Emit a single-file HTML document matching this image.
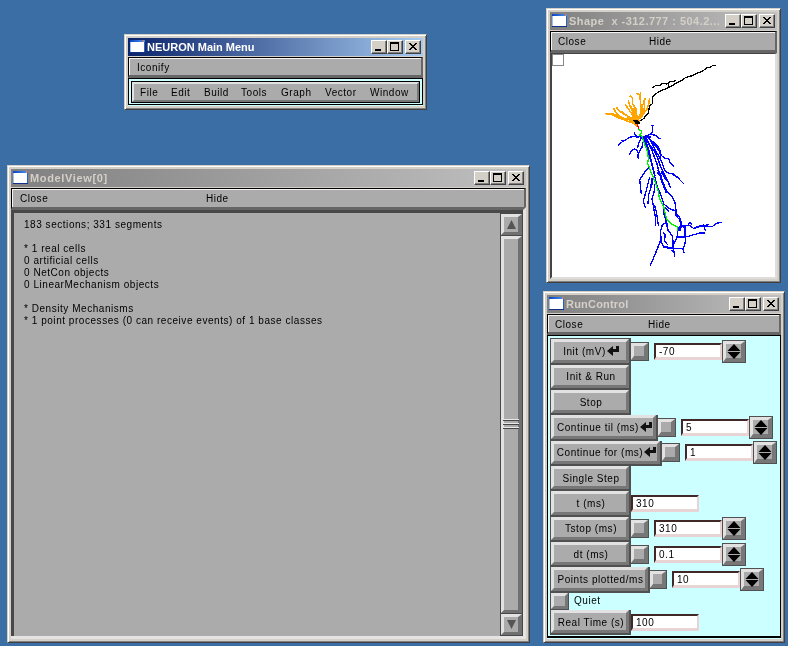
<!DOCTYPE html>
<html><head><meta charset="utf-8"><title>NEURON</title><style>
html,body{margin:0;padding:0}
body{width:788px;height:646px;background:#3a6ea5;position:relative;overflow:hidden;font-family:"Liberation Sans",sans-serif;font-size:11px;color:#000}
div{position:absolute;box-sizing:content-box}
.win{background:#d4d0c8;box-sizing:border-box;border:1px solid;border-color:#d4d0c8 #404040 #404040 #d4d0c8;box-shadow:inset 1px 1px 0 #fff,inset -1px -1px 0 #808080}
.tb{height:18px;font-weight:bold;font-size:11px;line-height:18px;white-space:nowrap;overflow:hidden}
.tb .ico{position:absolute;left:2px;top:2px}
.tb .tt{will-change:transform;position:absolute;left:19px;top:0}
.cb{width:14px;height:12px;background:#d4d0c8;border:1px solid;border-color:#fff #404040 #404040 #fff;box-shadow:inset -1px -1px 0 #808080}
.bv{border-style:solid}
.t{will-change:transform;white-space:nowrap;line-height:12px;font-size:10px;letter-spacing:0.54px}
.bl{display:inline-block;line-height:12px;font-size:10px;letter-spacing:0.54px;white-space:nowrap;position:relative;top:3px}
.hb{background:#ababab;box-sizing:border-box;border-top:1px solid #000;border-left:1px solid #000;border-bottom:3px solid #666;border-right:2px solid #666}
.hb i{position:absolute;left:0;top:0;right:0;bottom:0;border-top:1px solid #f4f4f4;border-left:1px solid #f4f4f4}
</style></head><body>
<svg width="0" height="0" style="position:absolute"><defs><linearGradient id="ig" x1="0" x2="1" y1="0" y2="0"><stop offset="0" stop-color="#0a44c4"/><stop offset="1" stop-color="#4a94f0"/></linearGradient></defs></svg>
<div class="win" style="left:124px;top:34px;width:303px;height:76px"></div>
<div class="tb" style="left:128px;top:38px;width:295px;background:linear-gradient(90deg,#0a246a,#a6caf0);color:#fff"><svg class="ico" width="16" height="14" viewBox="0 0 16 14"><rect x="0" y="0" width="15" height="13" fill="#fff"/><rect x="0" y="2" width="1" height="10" fill="#9cc0f4"/><rect x="14" y="2" width="1" height="10" fill="#2a60c8"/><rect x="0" y="0" width="15" height="2" fill="url(#ig)"/><rect x="0" y="12" width="15" height="1" fill="#10308a"/><rect x="13" y="0" width="1" height="2" fill="#ff7a30"/></svg><span class="tt" style="letter-spacing:0px">NEURON Main Menu</span></div>
<div class="cb" style="left:405px;top:40px"><svg width="16" height="14" viewBox="0 0 16 14" style="position:absolute;left:-1px;top:-1px"><path d="M4 3 L11 10 M5 3 L12 10 M11 3 L4 10 M12 3 L5 10" stroke="#000" stroke-width="1" shape-rendering="crispEdges"/></svg></div>
<div class="cb" style="left:387px;top:40px"><svg width="16" height="14" viewBox="0 0 16 14" style="position:absolute;left:-1px;top:-1px"><rect x="3.5" y="2.5" width="8" height="8" fill="none" stroke="#000"/><rect x="3" y="2" width="9" height="2" fill="#000"/></svg></div>
<div class="cb" style="left:371px;top:40px"><svg width="16" height="14" viewBox="0 0 16 14" style="position:absolute;left:-1px;top:-1px"><rect x="4" y="9" width="6" height="2" fill="#000"/></svg></div>
<div class="hb" style="left:128px;top:57px;width:295px;height:21px"><i></i></div>
<div class="t" style="left:137px;top:62px;">Iconify</div>
<div class="" style="left:128px;top:105px;width:295px;height:1px;background:#ccffff"></div>
<div class="" style="left:128px;top:78px;width:295px;height:27px;background:#ccffff;border:1px solid #000;box-sizing:border-box"></div>
<div class="" style="left:131px;top:81px;width:289px;height:22px;background:#000"></div>
<div class="bv" style="left:132px;top:82px;width:283px;height:16px;border-width:2px;background:#ababab;border-color:#e2e2e2 #777 #777 #e2e2e2;"></div>
<div class="t" style="left:140px;top:87px;">File</div>
<div class="t" style="left:171px;top:87px;">Edit</div>
<div class="t" style="left:204px;top:87px;">Build</div>
<div class="t" style="left:241px;top:87px;">Tools</div>
<div class="t" style="left:281px;top:87px;">Graph</div>
<div class="t" style="left:325px;top:87px;">Vector</div>
<div class="t" style="left:370px;top:87px;">Window</div>
<div class="win" style="left:7px;top:165px;width:523px;height:478px"></div>
<div class="tb" style="left:11px;top:169px;width:515px;background:linear-gradient(90deg,#808080,#c0c0c0);color:#d4d0c8"><svg class="ico" width="16" height="14" viewBox="0 0 16 14"><rect x="0" y="0" width="15" height="13" fill="#fff"/><rect x="0" y="2" width="1" height="10" fill="#9cc0f4"/><rect x="14" y="2" width="1" height="10" fill="#2a60c8"/><rect x="0" y="0" width="15" height="2" fill="url(#ig)"/><rect x="0" y="12" width="15" height="1" fill="#10308a"/><rect x="13" y="0" width="1" height="2" fill="#ff7a30"/></svg><span class="tt" style="letter-spacing:0.65px">ModelView[0]</span></div>
<div class="cb" style="left:508px;top:171px"><svg width="16" height="14" viewBox="0 0 16 14" style="position:absolute;left:-1px;top:-1px"><path d="M4 3 L11 10 M5 3 L12 10 M11 3 L4 10 M12 3 L5 10" stroke="#000" stroke-width="1" shape-rendering="crispEdges"/></svg></div>
<div class="cb" style="left:490px;top:171px"><svg width="16" height="14" viewBox="0 0 16 14" style="position:absolute;left:-1px;top:-1px"><rect x="3.5" y="2.5" width="8" height="8" fill="none" stroke="#000"/><rect x="3" y="2" width="9" height="2" fill="#000"/></svg></div>
<div class="cb" style="left:474px;top:171px"><svg width="16" height="14" viewBox="0 0 16 14" style="position:absolute;left:-1px;top:-1px"><rect x="4" y="9" width="6" height="2" fill="#000"/></svg></div>
<div class="hb" style="left:11px;top:188px;width:515px;height:22px"><i></i></div>
<div class="t" style="left:20px;top:193px;">Close</div>
<div class="t" style="left:206px;top:193px;">Hide</div>
<div class="" style="left:11px;top:210px;width:515px;height:428px;background:#484848"></div>
<div class="" style="left:14px;top:213px;width:486px;height:423px;background:#ababab"></div>
<div class="" style="left:11px;top:636px;width:515px;height:3px;background:#e4e4e4"></div>
<div class="" style="left:523px;top:210px;width:3px;height:429px;background:#e4e4e4"></div>
<svg style="position:absolute;left:520px;top:207px" width="6" height="6"><path d="M0 3 L3 3 L6 0 L6 6 L3 6 Z" fill="#484848"/><path d="M6 0 L6 6 L3 6 L3 3 Z" fill="#e4e4e4"/></svg>
<div class="t" style="left:24px;top:219px;">183 sections; 331 segments</div>
<div class="t" style="left:24px;top:243px;">* 1 real cells</div>
<div class="t" style="left:24px;top:255px;">0 artificial cells</div>
<div class="t" style="left:24px;top:267px;">0 NetCon objects</div>
<div class="t" style="left:24px;top:279px;">0 LinearMechanism objects</div>
<div class="t" style="left:24px;top:303px;">* Density Mechanisms</div>
<div class="t" style="left:24px;top:315px;">* 1 point processes (0 can receive events) of 1 base classes</div>
<div class="bv" style="left:501px;top:214px;width:15px;height:15px;border-width:3px;background:#ababab;border-color:#e2e2e2 #707070 #707070 #e2e2e2;border-right-width:4px;width:14px"><svg width="15" height="15" style="position:absolute;left:0;top:0"><path d="M7.5 3 L12 12 L3 12 Z" fill="#555"/></svg></div>
<div class="bv" style="left:501px;top:614px;width:15px;height:15px;border-width:3px;background:#ababab;border-color:#e2e2e2 #707070 #707070 #e2e2e2;border-right-width:4px;width:14px"><svg width="15" height="15" style="position:absolute;left:0;top:0"><path d="M7.5 12 L12 3 L3 3 Z" fill="#555"/></svg></div>
<div class="bv" style="left:501px;top:236px;width:15px;height:371px;border-width:3px;background:#ababab;border-color:#e2e2e2 #707070 #707070 #e2e2e2;border-right-width:4px;width:14px"></div>
<div class="" style="left:503px;top:419px;width:16px;height:1px;background:#e8e8e8"></div>
<div class="" style="left:503px;top:420px;width:16px;height:1px;background:#444"></div>
<div class="" style="left:503px;top:423px;width:16px;height:1px;background:#e8e8e8"></div>
<div class="" style="left:503px;top:424px;width:16px;height:1px;background:#444"></div>
<div class="" style="left:503px;top:427px;width:16px;height:1px;background:#e8e8e8"></div>
<div class="" style="left:503px;top:428px;width:16px;height:1px;background:#444"></div>
<div class="win" style="left:546px;top:8px;width:235px;height:275px"></div>
<div class="tb" style="left:550px;top:12px;width:227px;background:linear-gradient(90deg,#808080,#c0c0c0);color:#d4d0c8"><svg class="ico" width="16" height="14" viewBox="0 0 16 14"><rect x="0" y="0" width="15" height="13" fill="#fff"/><rect x="0" y="2" width="1" height="10" fill="#9cc0f4"/><rect x="14" y="2" width="1" height="10" fill="#2a60c8"/><rect x="0" y="0" width="15" height="2" fill="url(#ig)"/><rect x="0" y="12" width="15" height="1" fill="#10308a"/><rect x="13" y="0" width="1" height="2" fill="#ff7a30"/></svg><span class="tt" style="letter-spacing:0.47px">Shape&nbsp; x -312.777 : 504.2...</span></div>
<div class="cb" style="left:759px;top:14px"><svg width="16" height="14" viewBox="0 0 16 14" style="position:absolute;left:-1px;top:-1px"><path d="M4 3 L11 10 M5 3 L12 10 M11 3 L4 10 M12 3 L5 10" stroke="#000" stroke-width="1" shape-rendering="crispEdges"/></svg></div>
<div class="cb" style="left:741px;top:14px"><svg width="16" height="14" viewBox="0 0 16 14" style="position:absolute;left:-1px;top:-1px"><rect x="3.5" y="2.5" width="8" height="8" fill="none" stroke="#000"/><rect x="3" y="2" width="9" height="2" fill="#000"/></svg></div>
<div class="cb" style="left:725px;top:14px"><svg width="16" height="14" viewBox="0 0 16 14" style="position:absolute;left:-1px;top:-1px"><rect x="4" y="9" width="6" height="2" fill="#000"/></svg></div>
<div class="hb" style="left:550px;top:31px;width:227px;height:22px"><i></i></div>
<div class="t" style="left:558px;top:36px;">Close</div>
<div class="t" style="left:649px;top:36px;">Hide</div>
<div class="" style="left:550px;top:53px;width:227px;height:226px;background:#fff;border-left:2px solid #444;border-top:1px solid #444;border-right:2px solid #ddd;border-bottom:2px solid #ddd;box-sizing:border-box"></div>
<div class="" style="left:552px;top:54px;width:12px;height:12px;border:1px solid #888;box-sizing:border-box;background:#fff"></div>
<svg style="position:absolute;left:0;top:0" width="788" height="646" viewBox="0 0 788 646" shape-rendering="crispEdges"><path d="M605.1 113.4 L612 113.5 L618.6 116.6 L627.9 119.4 L636 122 M606 114 L612 114.5 L618 117.5 L626 120.5 L634 123.5 L637 126 M613.5 108.3 L616.7 113.9 L621 117 L628 120 M616.5 107.4 L620 111.5 L627 115.7 L632 119 L636 122 M625 104.4 L627.9 108.3 L630.6 112 L634 118 M628.3 100.4 L629.7 105.5 L632 110.1 L634.5 117 M629.7 95.7 L632.5 98 L632.5 103.6 L635.3 108.3 L635.5 118 M636.7 93.2 L640 95.3 L640.4 100.9 L640.9 106.4 L641.3 112 L638 119 M640.4 92.3 L640.4 96 M645.5 98.3 L643.6 100.9 L644.6 106.4 L643.6 112 L640 119 M649.7 98.1 L648.7 103.6 L647.4 108.3 L643.6 113.9 L640 118.5 M642 104 L642.5 110 L640 116 M631 106 L633 112 L634 116 M622 112 L628 116.5 L633 120" stroke="#ffa500" stroke-width="1.6" fill="none"/><path d="M630.5 108 L636.5 108 L638 119 L634 120 Z M627 117 L638 118 L640 121 L637 126 L630 122 Z M606 112.8 L613 112.8 L614 115 L607 114.5 Z" fill="#ffa500"/><path d="M618.4 145.4 L622 142 L626.7 139.2 L630 137.3 L634.1 136.1 L637.9 137.3 L640.6 136.4 M621.1 140.1 L623 141.5 M634.3 132.2 L635 135 L638.8 137.8 M651.3 125.5 L653.6 125.5 M652.5 125.5 L652.5 131.3 L650.9 134.1 L647.1 135.9 L642 136.5 M650.9 134 L655.5 135.5 L659.2 138.2 L661.5 138.5 M640 136.5 L651 136.5 M640 137.3 L651 137.3 M629.5 155 L631.8 150.3 L634.6 149.1 L636.9 149.9 L637.9 152.6 M638.3 159.1 L637.9 154.5 L639.7 150.8 L642 147.1 L643.4 140.6 L643.5 137 M637.4 148 L638.8 143.4 L641.1 138.2 M644 138 L646 144 L648 150 L650 158 L652 165 L654 173 L656 182 L657.1 185.9 L660.9 195.2 L663.6 203.6 L663.2 211 L664.6 216.6 L666.4 222.1 L668.3 231.4 M645 138 L647 145 L649.5 152 L651 160 L653 168 L655 176 M646 138 L650 145 L655 152 L658 159 L660 165 L664 174 L668 182 M648 138 L652 142 L656 146 L659 151 L662 156 L665 158.5 L668.5 158.7 L670.4 162.9 L673.6 166.6 M649 138 L653 145 L657 153 L661 160 L664.8 170.3 L666.6 172.6 L673.1 174 L679.6 178.6 M647 140 L651 148 L654 156 L657 164 L659 172 L662.7 181.3 L666.4 190.6 L671.1 195.2 L674.8 201.7 L676.2 211 L675.7 215.6 L679.4 219.4 L681.3 224.9 L684.1 226.3 M650 139 L655 146 L659 150 L661 156 M652 141 L657 145 L660 150 L660.6 159.1 M649 167.5 L644.4 172.6 L639.7 179.6 L640.4 185.9 L641.4 194.3 M649.7 176.6 L647.9 184.1 L645.5 193.4 L643.2 201.7 L645.5 207.7 M652 177.6 L650.6 188.7 L648.8 194.3 L647.9 204 M650.6 188.7 L652.5 183 L653 178 M654.8 184 L654.4 190.6 L652 198.9 L653.9 209.1 L655.3 216.6 L655.7 225.9 M657.1 216.6 L658.5 226.3 M654.5 205 L656.5 212 L657.1 216.6 M666.4 222 L662.7 224.9 L660.4 231.4 M663.6 203.6 L668.3 208.2 L672.9 210.1 L676.6 210.5 M664.6 207.3 L669.2 211.5 M661.8 172 L665.5 179.4 L668.3 182.2 L670.6 188.2 M660 177.6 L663.6 185.9 L666.4 193.4 M658 170 L661 176 L663 183 M666.4 172.5 L672 173.9 L677.6 177.6 L683.6 183.6 M657 172 L660 176 L662 172 L664 176 M677.7 227.4 L680 227.4 L680 230.8 L677.7 230.8 L677.7 227.4 M678.5 227.4 L678.5 230.8 M679.3 227.4 L679.3 230.8 M680 228 L683.4 225.7 L690.3 225.7 L693.7 228.6 L699.4 226.8 L704 225.7 L708.5 224.3 M693.7 227.8 L699.4 226 L704 225 M704 225.7 L712 226.8 L716.5 223.4 L721.7 222.3 M704 226 L705.7 231.4 M677.7 237.1 L685.7 237 L691.4 235.4 L699.4 233.1 L705.1 233.1 M677.7 228 L677.1 237.1 L674.3 242.8 L672.6 248.6 M684 225.1 L684.5 232.6 L685.7 240.6 L684 246.3 L682.8 249.1 L684 253.1 M685.7 225 L685.7 237 M675.4 212 L679.4 217.1 L681.7 224 L680 227 M688 225 L690 222.5 L692.5 224.5 M666.3 222.3 L662.3 224.6 L660.6 230.8 L661.1 241.7 L664 247.4 L673.1 248.6 L680 248.6 L682.8 249 M664 246.6 L673.1 247.8 M662.8 232.6 L665.1 234.8 L664.6 240.6 L667.4 244.6 M666.3 217.7 L667.4 229.1 L672.6 236.6 L673.1 244 L673.1 248.6 M660.6 240.6 L658.3 246.3 L653.7 257.7 L650.3 265.5 M673.1 248.6 L674.3 253.1 L674.8 257.1 M672 250 L673 252" stroke="#0000ff" stroke-width="1.35" fill="none"/><path d="M638.5 129 L641.3 131 L641.3 133.5 L639.5 135.2 L642 136.4 L644.4 143.4 L647.1 150.8 L648.5 159.1 L647.6 162.9 L650.9 172.1 L654.6 180.5 L655.3 182.2 L658.1 190.6 L659.5 198.9 L663.6 206.4 L665.5 214.7 L667.4 220.3 L672 224.5 L677.6 226.8 L677.6 230.5" stroke="#00f000" stroke-width="1.3" fill="none"/><path d="M637.5 124 L638.5 129" stroke="#ff0000" stroke-width="1.1" fill="none"/><path d="M640 121 L643.6 118.6 L648.3 113 L649.7 105.5 L652.5 103.7 L652.3 96.9 L656 93.6 L661.1 90.8 L668.6 87.6 L676.9 82.9 L682.5 80.1 L685.7 77.5 L692.7 75.5 L698.3 72.7 L702.9 70.9 L707.1 67.6 L710.4 67 L713.1 65.3 L715.9 65.3 M668.6 87.1 L668.6 83.4 L666.7 83.9 L663 83.1 L660.2 85.2 L655.6 85.7 L652.3 87.6 M668.6 83.4 L670 81.3 L673.7 81.3 L675.8 80.1" stroke="#000" stroke-width="1.3" fill="none"/><path d="M633 120 L637 120 L639.5 122 L639.5 123.5 L635.5 123.5 Z" fill="#000"/></svg>
<div class="win" style="left:543px;top:291px;width:242px;height:352px"></div>
<div class="tb" style="left:547px;top:295px;width:234px;background:linear-gradient(90deg,#808080,#c0c0c0);color:#d4d0c8"><svg class="ico" width="16" height="14" viewBox="0 0 16 14"><rect x="0" y="0" width="15" height="13" fill="#fff"/><rect x="0" y="2" width="1" height="10" fill="#9cc0f4"/><rect x="14" y="2" width="1" height="10" fill="#2a60c8"/><rect x="0" y="0" width="15" height="2" fill="url(#ig)"/><rect x="0" y="12" width="15" height="1" fill="#10308a"/><rect x="13" y="0" width="1" height="2" fill="#ff7a30"/></svg><span class="tt" style="letter-spacing:0.2px">RunControl</span></div>
<div class="cb" style="left:763px;top:297px"><svg width="16" height="14" viewBox="0 0 16 14" style="position:absolute;left:-1px;top:-1px"><path d="M4 3 L11 10 M5 3 L12 10 M11 3 L4 10 M12 3 L5 10" stroke="#000" stroke-width="1" shape-rendering="crispEdges"/></svg></div>
<div class="cb" style="left:745px;top:297px"><svg width="16" height="14" viewBox="0 0 16 14" style="position:absolute;left:-1px;top:-1px"><rect x="3.5" y="2.5" width="8" height="8" fill="none" stroke="#000"/><rect x="3" y="2" width="9" height="2" fill="#000"/></svg></div>
<div class="cb" style="left:729px;top:297px"><svg width="16" height="14" viewBox="0 0 16 14" style="position:absolute;left:-1px;top:-1px"><rect x="4" y="9" width="6" height="2" fill="#000"/></svg></div>
<div class="hb" style="left:547px;top:314px;width:234px;height:21px"><i></i></div>
<div class="t" style="left:555px;top:319px;">Close</div>
<div class="t" style="left:648px;top:319px;">Hide</div>
<div class="" style="left:547px;top:638px;width:234px;height:1px;background:#ccffff"></div>
<div class="" style="left:547px;top:335px;width:234px;height:303px;background:#ccffff;border:1px solid #000;border-bottom-width:2px;box-sizing:border-box"></div>
<div class="" style="left:550px;top:338px;width:1px;height:297px;background:#505050"></div>
<div class="" style="left:550px;top:338px;width:81px;height:1px;background:#505050"></div>
<div class="" style="left:551px;top:339px;width:80px;height:26px;background:#505050"></div>
<div class="bv" style="left:551px;top:339px;width:72px;height:18px;border-width:3px 3px 3px 3px;background:#ababab;border-color:#e2e2e2 #777 #777 #e2e2e2"></div>
<div class="t" style="left:551px;top:346px;width:80px;text-align:center">Init (mV)<svg width="12" height="10" viewBox="0 0 12 10" style="margin-left:1px;vertical-align:-1px"><path d="M0 5 L6 0 L6 3 L9 3 L9 0 L12 0 L12 6 L6 6 L6 10 Z" fill="#111"/></svg></div>
<div class="" style="left:630px;top:342px;width:19px;height:19px;background:#505050"></div>
<div class="bv" style="left:631px;top:343px;width:10px;height:10px;border-width:3px 4px 4px 3px;background:#ababab;border-color:#e2e2e2 #777 #777 #e2e2e2"></div>
<div class="" style="left:654px;top:343px;width:68px;height:17px;background:#fff;border-style:solid;border-width:2px 2px 3px 2px;border-color:#402828 #e8d4d4 #e8d4d4 #402828;box-sizing:border-box"></div>
<div class="t" style="left:659px;top:346px;">-70</div>
<div class="" style="left:722px;top:340px;width:24px;height:23px;background:#505050"></div>
<div class="bv" style="left:723px;top:341px;width:15px;height:14px;border-width:3px 4px 4px 3px;background:#ababab;border-color:#e2e2e2 #777 #777 #e2e2e2"><svg width="15" height="15" style="position:absolute;left:0;top:0"><path d="M8 0 L14.5 7 L1.5 7 Z M8 15 L14.5 8 L1.5 8 Z" fill="#000"/></svg></div>
<div class="" style="left:551px;top:365px;width:80px;height:25px;background:#505050"></div>
<div class="bv" style="left:551px;top:365px;width:72px;height:17px;border-width:3px 3px 3px 3px;background:#ababab;border-color:#e2e2e2 #777 #777 #e2e2e2"></div>
<div class="t" style="left:551px;top:371px;width:80px;text-align:center">Init &amp; Run</div>
<div class="" style="left:551px;top:390px;width:80px;height:25px;background:#505050"></div>
<div class="bv" style="left:551px;top:390px;width:72px;height:17px;border-width:3px 3px 3px 3px;background:#ababab;border-color:#e2e2e2 #777 #777 #e2e2e2"></div>
<div class="t" style="left:551px;top:397px;width:80px;text-align:center">Stop</div>
<div class="" style="left:551px;top:415px;width:107px;height:26px;background:#505050"></div>
<div class="bv" style="left:551px;top:415px;width:99px;height:18px;border-width:3px 3px 3px 3px;background:#ababab;border-color:#e2e2e2 #777 #777 #e2e2e2"></div>
<div class="t" style="left:551px;top:422px;width:107px;text-align:center">Continue til (ms)<svg width="12" height="10" viewBox="0 0 12 10" style="margin-left:1px;vertical-align:-1px"><path d="M0 5 L6 0 L6 3 L9 3 L9 0 L12 0 L12 6 L6 6 L6 10 Z" fill="#111"/></svg></div>
<div class="" style="left:657px;top:418px;width:19px;height:19px;background:#505050"></div>
<div class="bv" style="left:658px;top:419px;width:10px;height:10px;border-width:3px 4px 4px 3px;background:#ababab;border-color:#e2e2e2 #777 #777 #e2e2e2"></div>
<div class="" style="left:681px;top:419px;width:68px;height:17px;background:#fff;border-style:solid;border-width:2px 2px 3px 2px;border-color:#402828 #e8d4d4 #e8d4d4 #402828;box-sizing:border-box"></div>
<div class="t" style="left:686px;top:422px;">5</div>
<div class="" style="left:749px;top:416px;width:24px;height:23px;background:#505050"></div>
<div class="bv" style="left:750px;top:417px;width:15px;height:14px;border-width:3px 4px 4px 3px;background:#ababab;border-color:#e2e2e2 #777 #777 #e2e2e2"><svg width="15" height="15" style="position:absolute;left:0;top:0"><path d="M8 0 L14.5 7 L1.5 7 Z M8 15 L14.5 8 L1.5 8 Z" fill="#000"/></svg></div>
<div class="" style="left:551px;top:441px;width:111px;height:25px;background:#505050"></div>
<div class="bv" style="left:551px;top:441px;width:103px;height:17px;border-width:3px 3px 3px 3px;background:#ababab;border-color:#e2e2e2 #777 #777 #e2e2e2"></div>
<div class="t" style="left:551px;top:447px;width:111px;text-align:center">Continue for (ms)<svg width="12" height="10" viewBox="0 0 12 10" style="margin-left:1px;vertical-align:-1px"><path d="M0 5 L6 0 L6 3 L9 3 L9 0 L12 0 L12 6 L6 6 L6 10 Z" fill="#111"/></svg></div>
<div class="" style="left:661px;top:443px;width:19px;height:19px;background:#505050"></div>
<div class="bv" style="left:662px;top:444px;width:10px;height:10px;border-width:3px 4px 4px 3px;background:#ababab;border-color:#e2e2e2 #777 #777 #e2e2e2"></div>
<div class="" style="left:685px;top:444px;width:68px;height:17px;background:#fff;border-style:solid;border-width:2px 2px 3px 2px;border-color:#402828 #e8d4d4 #e8d4d4 #402828;box-sizing:border-box"></div>
<div class="t" style="left:690px;top:447px;">1</div>
<div class="" style="left:753px;top:441px;width:24px;height:23px;background:#505050"></div>
<div class="bv" style="left:754px;top:442px;width:15px;height:14px;border-width:3px 4px 4px 3px;background:#ababab;border-color:#e2e2e2 #777 #777 #e2e2e2"><svg width="15" height="15" style="position:absolute;left:0;top:0"><path d="M8 0 L14.5 7 L1.5 7 Z M8 15 L14.5 8 L1.5 8 Z" fill="#000"/></svg></div>
<div class="" style="left:551px;top:466px;width:80px;height:25px;background:#505050"></div>
<div class="bv" style="left:551px;top:466px;width:72px;height:17px;border-width:3px 3px 3px 3px;background:#ababab;border-color:#e2e2e2 #777 #777 #e2e2e2"></div>
<div class="t" style="left:551px;top:473px;width:80px;text-align:center">Single Step</div>
<div class="" style="left:551px;top:491px;width:80px;height:26px;background:#505050"></div>
<div class="bv" style="left:551px;top:491px;width:72px;height:18px;border-width:3px 3px 3px 3px;background:#ababab;border-color:#e2e2e2 #777 #777 #e2e2e2"></div>
<div class="t" style="left:551px;top:498px;width:80px;text-align:center">t (ms)</div>
<div class="" style="left:631px;top:495px;width:68px;height:17px;background:#fff;border-style:solid;border-width:2px 2px 3px 2px;border-color:#402828 #e8d4d4 #e8d4d4 #402828;box-sizing:border-box"></div>
<div class="t" style="left:636px;top:498px;">310</div>
<div class="" style="left:551px;top:517px;width:80px;height:25px;background:#505050"></div>
<div class="bv" style="left:551px;top:517px;width:72px;height:17px;border-width:3px 3px 3px 3px;background:#ababab;border-color:#e2e2e2 #777 #777 #e2e2e2"></div>
<div class="t" style="left:551px;top:523px;width:80px;text-align:center">Tstop (ms)</div>
<div class="" style="left:630px;top:519px;width:19px;height:19px;background:#505050"></div>
<div class="bv" style="left:631px;top:520px;width:10px;height:10px;border-width:3px 4px 4px 3px;background:#ababab;border-color:#e2e2e2 #777 #777 #e2e2e2"></div>
<div class="" style="left:654px;top:520px;width:68px;height:17px;background:#fff;border-style:solid;border-width:2px 2px 3px 2px;border-color:#402828 #e8d4d4 #e8d4d4 #402828;box-sizing:border-box"></div>
<div class="t" style="left:659px;top:523px;">310</div>
<div class="" style="left:722px;top:517px;width:24px;height:23px;background:#505050"></div>
<div class="bv" style="left:723px;top:518px;width:15px;height:14px;border-width:3px 4px 4px 3px;background:#ababab;border-color:#e2e2e2 #777 #777 #e2e2e2"><svg width="15" height="15" style="position:absolute;left:0;top:0"><path d="M8 0 L14.5 7 L1.5 7 Z M8 15 L14.5 8 L1.5 8 Z" fill="#000"/></svg></div>
<div class="" style="left:551px;top:542px;width:80px;height:25px;background:#505050"></div>
<div class="bv" style="left:551px;top:542px;width:72px;height:17px;border-width:3px 3px 3px 3px;background:#ababab;border-color:#e2e2e2 #777 #777 #e2e2e2"></div>
<div class="t" style="left:551px;top:549px;width:80px;text-align:center">dt (ms)</div>
<div class="" style="left:630px;top:545px;width:19px;height:19px;background:#505050"></div>
<div class="bv" style="left:631px;top:546px;width:10px;height:10px;border-width:3px 4px 4px 3px;background:#ababab;border-color:#e2e2e2 #777 #777 #e2e2e2"></div>
<div class="" style="left:654px;top:546px;width:68px;height:17px;background:#fff;border-style:solid;border-width:2px 2px 3px 2px;border-color:#402828 #e8d4d4 #e8d4d4 #402828;box-sizing:border-box"></div>
<div class="t" style="left:659px;top:549px;">0.1</div>
<div class="" style="left:722px;top:543px;width:24px;height:23px;background:#505050"></div>
<div class="bv" style="left:723px;top:544px;width:15px;height:14px;border-width:3px 4px 4px 3px;background:#ababab;border-color:#e2e2e2 #777 #777 #e2e2e2"><svg width="15" height="15" style="position:absolute;left:0;top:0"><path d="M8 0 L14.5 7 L1.5 7 Z M8 15 L14.5 8 L1.5 8 Z" fill="#000"/></svg></div>
<div class="" style="left:551px;top:567px;width:99px;height:26px;background:#505050"></div>
<div class="bv" style="left:551px;top:567px;width:91px;height:18px;border-width:3px 3px 3px 3px;background:#ababab;border-color:#e2e2e2 #777 #777 #e2e2e2"></div>
<div class="t" style="left:551px;top:574px;width:99px;text-align:center">Points plotted/ms</div>
<div class="" style="left:649px;top:570px;width:18px;height:19px;background:#505050"></div>
<div class="bv" style="left:650px;top:571px;width:9px;height:10px;border-width:3px 4px 4px 3px;background:#ababab;border-color:#e2e2e2 #777 #777 #e2e2e2"></div>
<div class="" style="left:672px;top:571px;width:68px;height:17px;background:#fff;border-style:solid;border-width:2px 2px 3px 2px;border-color:#402828 #e8d4d4 #e8d4d4 #402828;box-sizing:border-box"></div>
<div class="t" style="left:677px;top:574px;">10</div>
<div class="" style="left:740px;top:568px;width:24px;height:23px;background:#505050"></div>
<div class="bv" style="left:741px;top:569px;width:15px;height:14px;border-width:3px 4px 4px 3px;background:#ababab;border-color:#e2e2e2 #777 #777 #e2e2e2"><svg width="15" height="15" style="position:absolute;left:0;top:0"><path d="M8 0 L14.5 7 L1.5 7 Z M8 15 L14.5 8 L1.5 8 Z" fill="#000"/></svg></div>
<div class="" style="left:551px;top:593px;width:18px;height:17px;background:#505050"></div>
<div class="bv" style="left:551px;top:593px;width:11px;height:10px;border-width:3px 3px 3px 3px;background:#ababab;border-color:#e2e2e2 #777 #777 #e2e2e2"></div>
<div class="t" style="left:574px;top:595px;">Quiet</div>
<div class="" style="left:551px;top:610px;width:80px;height:25px;background:#505050"></div>
<div class="bv" style="left:551px;top:610px;width:72px;height:17px;border-width:3px 3px 3px 3px;background:#ababab;border-color:#e2e2e2 #777 #777 #e2e2e2"></div>
<div class="t" style="left:551px;top:617px;width:80px;text-align:center">Real Time (s)</div>
<div class="" style="left:631px;top:614px;width:68px;height:17px;background:#fff;border-style:solid;border-width:2px 2px 3px 2px;border-color:#402828 #e8d4d4 #e8d4d4 #402828;box-sizing:border-box"></div>
<div class="t" style="left:636px;top:617px;">100</div>
</body></html>
